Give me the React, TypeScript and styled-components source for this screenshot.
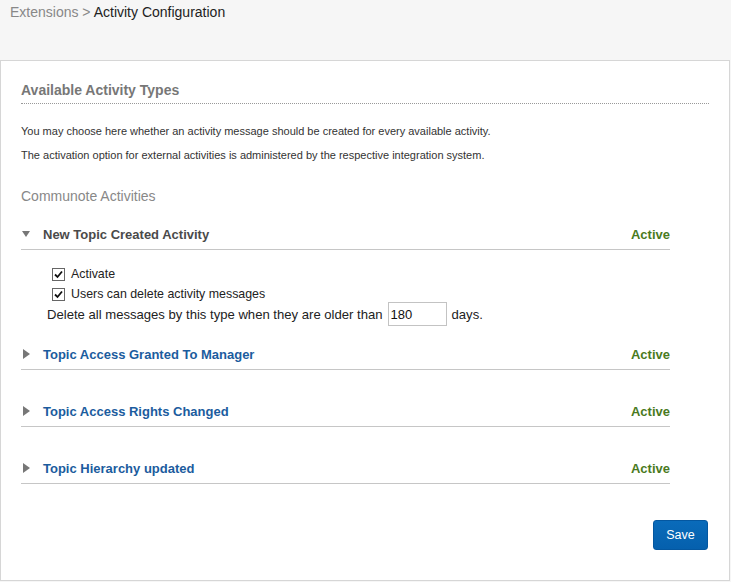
import React from "react";
import styled, { createGlobalStyle } from "styled-components";

interface Activity {
  title: string;
  expanded: boolean;
  active: boolean;
}

const activities: Activity[] = [
  { title: "New Topic Created Activity", expanded: true, active: true },
  { title: "Topic Access Granted To Manager", expanded: false, active: true },
  { title: "Topic Access Rights Changed", expanded: false, active: true },
  { title: "Topic Hierarchy updated", expanded: false, active: true },
];

const GlobalStyle = createGlobalStyle`
  html, body {
    margin: 0;
    padding: 0;
    background: #f6f6f6;
    font-family: "Liberation Sans", Arial, sans-serif;
    color: #333;
  }
`;

const Page = styled.div`
  width: 731px;
`;

const Breadcrumb = styled.div`
  height: 60px;
  box-sizing: border-box;
  padding: 3px 10px 0;
  font-size: 14px;
  line-height: 18px;
  color: #222;
`;

const Crumb = styled.span`
  color: #888;
`;

const Panel = styled.div`
  width: 730px;
  box-sizing: border-box;
  background: #fff;
  border: 1px solid #d6d6d6;
  padding: 20px 20px 30px 20px;
`;

const Heading = styled.h2`
  margin: 0;
  font-size: 14px;
  line-height: 18px;
  font-weight: bold;
  color: #777;
  padding-bottom: 4px;
  border-bottom: 1px dotted #999;
`;

const Description = styled.p<{ $first?: boolean }>`
  margin: ${({ $first }) => ($first ? "20px" : "10px")} 0 0;
  font-size: 11px;
  line-height: 14px;
  color: #333;
`;

const GroupTitle = styled.h3`
  margin: 25px 0 20px;
  font-size: 14px;
  line-height: 18px;
  font-weight: normal;
  color: #888;
`;

const ActivityList = styled.div`
  width: 649px;
  display: flex;
  flex-direction: column;
`;

const ActivityBlock = styled.div<{ $open: boolean }>`
  margin-bottom: ${({ $open }) => ($open ? "19px" : "32px")};

  &:last-child {
    margin-bottom: 0;
  }
`;

const ActivityHeader = styled.div`
  display: flex;
  align-items: center;
  height: 18px;
  padding-bottom: 6px;
  border-bottom: 1px solid #c6c6c6;
`;

const Arrow = styled.span<{ $open: boolean }>`
  width: 0;
  height: 0;
  margin-left: ${({ $open }) => ($open ? "1px" : "2px")};
  margin-right: 13px;
  ${({ $open }) =>
    $open
      ? `border-left: 4px solid transparent;
         border-right: 4px solid transparent;
         border-top: 6px solid #777;`
      : `border-top: 5px solid transparent;
         border-bottom: 5px solid transparent;
         border-left: 7px solid #777;`}
`;

const ActivityTitle = styled.span<{ $open: boolean }>`
  flex: 1;
  font-size: 13px;
  font-weight: bold;
  color: ${({ $open }) => ($open ? "#4a4a4a" : "#1b5c9e")};
`;

const Status = styled.span`
  font-size: 13px;
  font-weight: bold;
  color: #4a7a1e;
`;

const Options = styled.div`
  padding: 14px 0 0 26px;
  font-size: 12.4px;
  color: #222;
`;

const OptionRow = styled.label`
  display: flex;
  align-items: center;
  height: 20px;
  padding-left: 5px;
  gap: 6px;
`;

const CheckBox = styled.span`
  width: 11px;
  height: 11px;
  border: 1px solid #666;
  background: #fff;
  display: flex;
  align-items: center;
  justify-content: center;
`;

const RetentionRow = styled.div`
  display: flex;
  align-items: center;
  height: 24px;
  margin-top: -2px;
  gap: 5px;
  font-size: 13.1px;
`;

const DaysInput = styled.input`
  width: 59px;
  height: 24px;
  box-sizing: border-box;
  border: 1px solid #c3c3c3;
  padding: 0 2px;
  font-family: "Liberation Sans", Arial, sans-serif;
  font-size: 13px;
  color: #111;
  outline: none;
`;

const Footer = styled.div`
  display: flex;
  justify-content: flex-end;
  margin-top: 36px;
  padding-right: 1px;
`;

const SaveButton = styled.button`
  width: 55px;
  height: 30px;
  border: 1px solid #0457a0;
  border-radius: 3px;
  background: linear-gradient(#0a6bba, #0560ad);
  color: #fff;
  font-family: "Liberation Sans", Arial, sans-serif;
  font-size: 12.5px;
  cursor: pointer;
`;

const Check: React.FC = () => (
  <svg width="9" height="9" viewBox="0 0 9 9">
    <path d="M1 4.5 L3.5 7 L8 1.5" fill="none" stroke="#111" strokeWidth="1.8" />
  </svg>
);

const App: React.FC = () => {
  return (
    <Page>
      <GlobalStyle />
      <Breadcrumb>
        <Crumb>Extensions &gt; </Crumb>Activity Configuration
      </Breadcrumb>
      <Panel>
        <Heading>Available Activity Types</Heading>
        <Description $first>
          You may choose here whether an activity message should be created for
          every available activity.
        </Description>
        <Description>
          The activation option for external activities is administered by the
          respective integration system.
        </Description>
        <GroupTitle>Communote Activities</GroupTitle>
        <ActivityList>
          {activities.map((activity) => (
            <ActivityBlock key={activity.title} $open={activity.expanded}>
              <ActivityHeader>
                <Arrow $open={activity.expanded} />
                <ActivityTitle $open={activity.expanded}>
                  {activity.title}
                </ActivityTitle>
                {activity.active && <Status>Active</Status>}
              </ActivityHeader>
              {activity.expanded && (
                <Options>
                  <OptionRow>
                    <CheckBox>
                      <Check />
                    </CheckBox>
                    Activate
                  </OptionRow>
                  <OptionRow>
                    <CheckBox>
                      <Check />
                    </CheckBox>
                    Users can delete activity messages
                  </OptionRow>
                  <RetentionRow>
                    Delete all messages by this type when they are older than
                    <DaysInput defaultValue="180" />
                    days.
                  </RetentionRow>
                </Options>
              )}
            </ActivityBlock>
          ))}
        </ActivityList>
        <Footer>
          <SaveButton>Save</SaveButton>
        </Footer>
      </Panel>
    </Page>
  );
};

export default App;
